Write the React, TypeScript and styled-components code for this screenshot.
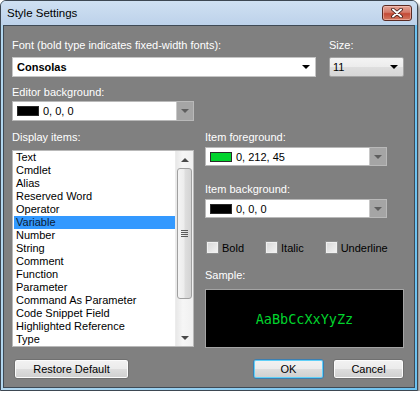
import styled, { createGlobalStyle } from "styled-components";

const GlobalStyle = createGlobalStyle`
  body {
    margin: 0;
    background: #ffffff;
    font-family: "Liberation Sans", Arial, sans-serif;
  }
`;

const Window = styled.div`
  width: 418px;
  height: 391px;
  box-sizing: border-box;
  border: 1px solid #3d4752;
  border-radius: 6px 6px 0 0;
  background: #a8d3ef;
  display: flex;
  flex-direction: column;
  box-shadow: 2px 3px 3px rgba(0, 0, 0, 0.45);
`;

const TitleBar = styled.div`
  height: 24px;
  flex: none;
  display: flex;
  align-items: center;
  justify-content: space-between;
  padding: 0 5px 0 6px;
  border-radius: 5px 5px 0 0;
  background: linear-gradient(#cfe0f2, #bdd2ea);
`;

const Title = styled.span`
  font-size: 11.5px;
  color: #000;
`;

const CloseButton = styled.div`
  width: 30px;
  height: 16px;
  box-sizing: border-box;
  border: 1px solid #5a2a22;
  border-radius: 3px;
  display: flex;
  align-items: center;
  justify-content: center;
  background: linear-gradient(#e3a597 0%, #d47a69 45%, #c44a36 55%, #d2785f 100%);
  box-shadow: inset 0 0 0 1px rgba(255, 210, 200, 0.5);
`;

const Frame = styled.div`
  flex: 1;
  display: flex;
  padding: 0 2px 2px 2px;
  background: linear-gradient(90deg, #b3d7ef, #6cc3f1);
`;

const Client = styled.div`
  flex: 1;
  display: flex;
  flex-direction: column;
  background: #808080;
  border: 1px solid #3f4a55;
  padding: 12px 10px 0 8px;
`;

const Label = styled.div<{ $gap?: number; $top?: number }>`
  font-size: 11px;
  line-height: 15px;
  height: 15px;
  color: #ffffff;
  margin-top: ${(p) => p.$top ?? 0}px;
  margin-bottom: ${(p) => p.$gap ?? 2}px;
  white-space: nowrap;
`;

const TopRow = styled.div`
  display: grid;
  grid-template-columns: 1fr 75px;
  column-gap: 13px;
`;

const Field = styled.div`
  display: flex;
  flex-direction: column;
`;

const FontCombo = styled.div`
  height: 20px;
  box-sizing: border-box;
  background: #fff;
  border: 1px solid #c6c6c6;
  display: flex;
  align-items: center;
  justify-content: space-between;
  padding: 0 5px 0 4px;
  font-size: 11px;
  font-weight: bold;
  color: #000;
`;

const SizeCombo = styled.div`
  height: 20px;
  box-sizing: border-box;
  border: 1px solid #a3a3a3;
  border-radius: 2px;
  background: linear-gradient(#f4f4f4 0%, #ececec 50%, #dedede 51%, #d6d6d6 100%);
  display: flex;
  align-items: center;
  justify-content: space-between;
  padding: 0 5px 0 3px;
  font-size: 11px;
  color: #000;
`;

const BlackArrow = styled.span`
  width: 0;
  height: 0;
  border-left: 4px solid transparent;
  border-right: 4px solid transparent;
  border-top: 4px solid #000;
`;

const ColorCombo = styled.div<{ $h?: number }>`
  width: 182px;
  height: ${(p) => p.$h ?? 20}px;
  box-sizing: border-box;
  background: #fff;
  border: 1px solid #b9b9b9;
  display: flex;
  align-items: center;
  font-size: 11px;
  color: #000;
`;

const Swatch = styled.span<{ $color: string }>`
  width: 22px;
  height: 10px;
  box-sizing: border-box;
  margin: 0 4px 0 4px;
  background: ${(p) => p.$color};
  border: 1px solid #2a2a2a;
`;

const ComboText = styled.span`
  flex: 1;
`;

const GrayDrop = styled.span`
  width: 16px;
  align-self: stretch;
  background: #a5a5a5;
  border-left: 1px solid #c8c8c8;
  display: flex;
  align-items: center;
  justify-content: center;

  &::after {
    content: "";
    border-left: 4px solid transparent;
    border-right: 4px solid transparent;
    border-top: 4px solid #5e5e5e;
  }
`;

const Columns = styled.div`
  display: grid;
  grid-template-columns: 182px 1fr;
  column-gap: 11px;
  margin-top: 9px;
`;

const ListBox = styled.div`
  height: 197px;
  box-sizing: border-box;
  background: #fff;
  border: 1px solid #b9b9b9;
  display: flex;
`;

const Items = styled.div`
  flex: 1;
  padding-left: 1px;
`;

const Item = styled.div<{ $selected?: boolean }>`
  height: 13px;
  line-height: 13px;
  font-size: 11px;
  padding-left: 2px;
  color: ${(p) => (p.$selected ? "#0b1b33" : "#000")};
  background: ${(p) => (p.$selected ? "#3399ff" : "transparent")};
  white-space: nowrap;
`;

const ScrollBar = styled.div`
  width: 17px;
  display: flex;
  flex-direction: column;
  background: linear-gradient(90deg, #e8e8e8, #f6f6f6 40%, #f0f0f0);
  border-left: 1px solid #ececec;
`;

const ScrollArrow = styled.div<{ $down?: boolean }>`
  height: 17px;
  display: flex;
  align-items: center;
  justify-content: center;

  &::after {
    content: "";
    border-left: 4px solid transparent;
    border-right: 4px solid transparent;
    ${(p) =>
      p.$down ? "border-top: 4px solid #4a4a4a;" : "border-bottom: 4px solid #4a4a4a;"}
  }
`;

const Thumb = styled.div`
  height: 131px;
  margin: 0 1px;
  box-sizing: border-box;
  border: 1px solid #a0a0a0;
  border-radius: 3px;
  background: linear-gradient(90deg, #f4f4f4, #ededed 45%, #dedede 55%, #d4d4d4);
  display: flex;
  align-items: center;
  justify-content: center;
`;

const Grip = styled.div`
  width: 7px;
  height: 7px;
  background: repeating-linear-gradient(#5a5a5a 0 1px, transparent 1px 2px);
`;

const ScrollTrack = styled.div`
  flex: 1;
`;

const CheckRow = styled.div`
  display: flex;
  gap: 21px;
  padding-left: 1px;
  margin-top: 22px;
  height: 15px;
  align-items: center;
`;

const Check = styled.label`
  display: flex;
  align-items: center;
  gap: 3px;
  font-size: 11px;
  color: #000;
`;

const Box = styled.span`
  width: 13px;
  height: 13px;
  box-sizing: border-box;
  border: 1px solid #8e8f8f;
  background: linear-gradient(135deg, #d6d6d6, #f4f4f4);
  box-shadow: inset 0 0 0 1px #f0f0f0;
`;

const Sample = styled.div`
  height: 59px;
  box-sizing: border-box;
  background: #000;
  border: 1px solid #a4a4a4;
  display: flex;
  align-items: center;
  justify-content: center;
  font-family: "DejaVu Sans Mono", "Liberation Mono", monospace;
  font-size: 13.5px;
  color: rgb(0, 212, 45);
`;

const ButtonRow = styled.div`
  display: flex;
  align-items: center;
  margin-top: 11px;
  padding-left: 2px;
  gap: 9px;
`;

const Spacer = styled.div`
  flex: 1;
`;

const Button = styled.button<{ $w: number; $primary?: boolean }>`
  width: ${(p) => p.$w}px;
  height: 20px;
  padding: 0;
  font-family: "Liberation Sans", Arial, sans-serif;
  font-size: 11px;
  color: #000;
  border: 1px solid ${(p) => (p.$primary ? "#3c7fb1" : "#707070")};
  border-radius: 3px;
  background: linear-gradient(#f2f2f2 0%, #ebebeb 50%, #dddddd 51%, #cfcfcf 100%);
  box-shadow: inset 0 0 0 1px ${(p) => (p.$primary ? "#60d0f8" : "#fbfbfb")};
`;

const items = [
  "Text",
  "Cmdlet",
  "Alias",
  "Reserved Word",
  "Operator",
  "Variable",
  "Number",
  "String",
  "Comment",
  "Function",
  "Parameter",
  "Command As Parameter",
  "Code Snippet Field",
  "Highlighted Reference",
  "Type",
];

function CloseIcon() {
  return (
    <svg width="12" height="10" viewBox="0 0 12 10">
      <path d="M2 1.5 L10 8.5 M10 1.5 L2 8.5" stroke="#3a1510" strokeWidth="3.6" strokeLinecap="round" />
      <path d="M2 1.5 L10 8.5 M10 1.5 L2 8.5" stroke="#ffffff" strokeWidth="2" strokeLinecap="round" />
    </svg>
  );
}

function App() {
  return (
    <>
      <GlobalStyle />
      <Window>
        <TitleBar>
          <Title>Style Settings</Title>
          <CloseButton>
            <CloseIcon />
          </CloseButton>
        </TitleBar>
        <Frame>
          <Client>
            <TopRow>
              <Field>
                <Label $gap={4}>Font (bold type indicates fixed-width fonts):</Label>
                <FontCombo>
                  Consolas
                  <BlackArrow />
                </FontCombo>
              </Field>
              <Field>
                <Label $gap={4}>Size:</Label>
                <SizeCombo>
                  11
                  <BlackArrow />
                </SizeCombo>
              </Field>
            </TopRow>

            <Label $top={8} $gap={1}>
              Editor background:
            </Label>
            <ColorCombo>
              <Swatch $color="#000000" />
              <ComboText>0, 0, 0</ComboText>
              <GrayDrop />
            </ColorCombo>

            <Columns>
              <Field>
                <Label $gap={5}>Display items:</Label>
                <ListBox>
                  <Items>
                    {items.map((name) => (
                      <Item key={name} $selected={name === "Variable"}>
                        {name}
                      </Item>
                    ))}
                  </Items>
                  <ScrollBar>
                    <ScrollArrow />
                    <Thumb>
                      <Grip />
                    </Thumb>
                    <ScrollTrack />
                    <ScrollArrow $down />
                  </ScrollBar>
                </ListBox>
              </Field>

              <Field>
                <Label>Item foreground:</Label>
                <ColorCombo $h={19}>
                  <Swatch $color="rgb(0, 212, 45)" />
                  <ComboText>0, 212, 45</ComboText>
                  <GrayDrop />
                </ColorCombo>
                <Label $top={16}>Item background:</Label>
                <ColorCombo $h={19}>
                  <Swatch $color="#000000" />
                  <ComboText>0, 0, 0</ComboText>
                  <GrayDrop />
                </ColorCombo>
                <CheckRow>
                  <Check>
                    <Box />
                    Bold
                  </Check>
                  <Check>
                    <Box />
                    Italic
                  </Check>
                  <Check>
                    <Box />
                    Underline
                  </Check>
                </CheckRow>
                <Label $top={13} $gap={6}>
                  Sample:
                </Label>
                <Sample>AaBbCcXxYyZz</Sample>
              </Field>
            </Columns>

            <ButtonRow>
              <Button $w={115}>Restore Default</Button>
              <Spacer />
              <Button $w={71} $primary>
                OK
              </Button>
              <Button $w={71}>Cancel</Button>
            </ButtonRow>
          </Client>
        </Frame>
      </Window>
    </>
  );
}

export default App;
